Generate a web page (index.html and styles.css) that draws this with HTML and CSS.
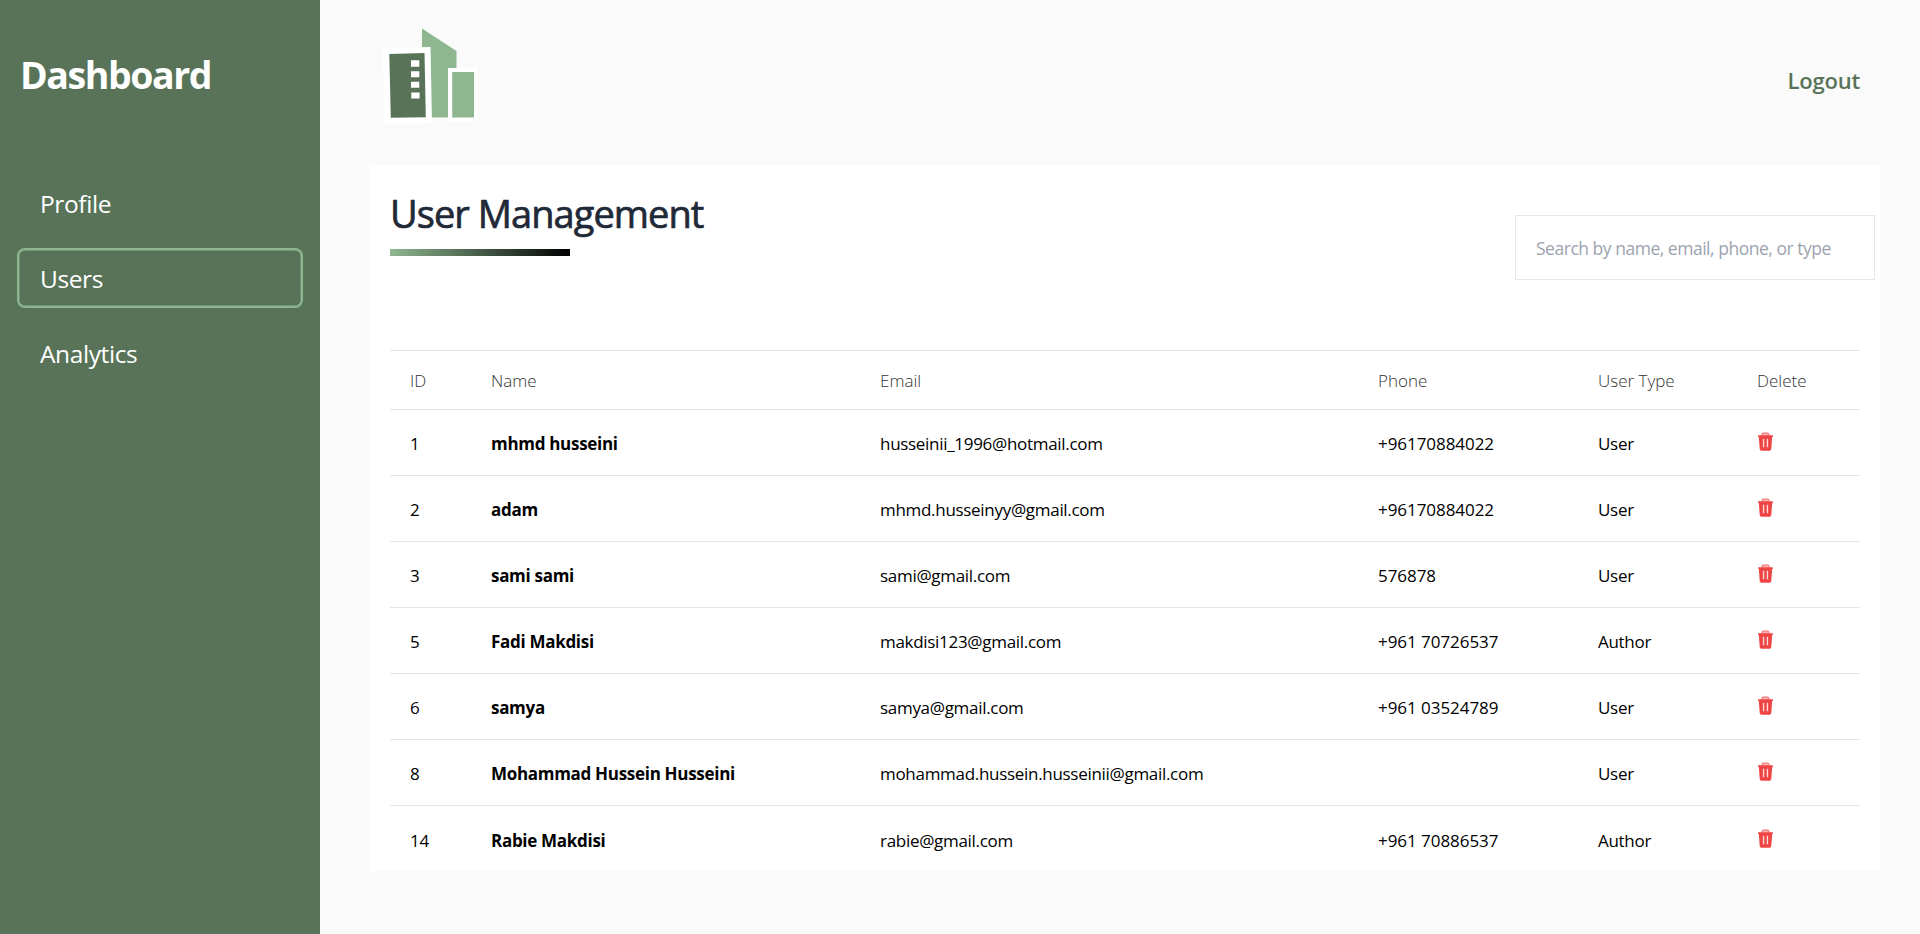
FILE: index.html
```html
<!DOCTYPE html>
<html lang="en">
<head>
<meta charset="utf-8">
<title>Dashboard</title>
<link rel="stylesheet" href="styles.css">
</head>
<body>
<svg width="0" height="0" class="defs" aria-hidden="true">
  <symbol id="trash" viewBox="0 0 14 18" preserveAspectRatio="none">
    <path d="M3.8 3.5V2.2Q3.8.9 5.1.9h3.8q1.3 0 1.3 1.3v1.3" fill="#fbb4b4" stroke="#f47070" stroke-width="1"/>
    <path d="M.1 3.1h13.8v1.6h-.7l-.8 11.4q-.1 1.6-1.7 1.6H3.3q-1.6 0-1.7-1.6L.8 4.7H.1z" fill="#ef4444"/>
    <path d="M5.200 6.400v8M8.800 6.400v8" stroke="#fff" stroke-opacity=".8" stroke-width="1.300"/>
  </symbol>
</svg>
<div class="layout">
  <aside class="sidebar">
    <h1 class="brand">Dashboard</h1>
    <nav class="nav">
      <a class="nav-item">Profile</a>
      <a class="nav-item active">Users</a>
      <a class="nav-item">Analytics</a>
    </nav>
  </aside>
  <main class="main">
    <header class="topbar">
      <svg class="logo" width="100" height="106" viewBox="0 0 100 106">
        <path d="M39 8.500 73.500 31v66.500H39z" fill="#8eb790"/>
        <path d="M0 28 47.500 27l1.500 76-48 1z" fill="#fff"/>
        <path d="M6.300 34 41.500 33l1.300 64.200-35 .5z" fill="#587358"/>
        <path d="M28 40.300h8.300v6.400H28zM28 51.300h8.300v6H28zM28 61.800h8.300v6H28zM28.300 72.500h8.300v6h-8.300z" fill="#fff"/>
        <path d="M65 48h30v53H65z" fill="#fff"/>
        <path d="M69.200 52h21.800v45.600H69.200z" fill="#8eb790"/>
      </svg>
      <a class="logout">Logout</a>
    </header>
    <section class="card">
      <div class="card-head">
        <div>
          <h2 class="title">User Management</h2>
          <div class="underline"></div>
        </div>
        <input class="search" type="text" placeholder="Search by name, email, phone, or type">
      </div>
      <table class="users">
        <colgroup><col class="c-id"><col class="c-name"><col class="c-email"><col class="c-phone"><col class="c-type"><col class="c-del"></colgroup>
        <thead><tr><th>ID</th><th>Name</th><th>Email</th><th>Phone</th><th>User Type</th><th>Delete</th></tr></thead>
        <tbody>
          <tr><td>1</td><td class="name">mhmd husseini</td><td>husseinii_1996@hotmail.com</td><td class="phone">+96170884022</td><td>User</td><td><svg class="trash"><use href="#trash"/></svg></td></tr>
          <tr><td>2</td><td class="name">adam</td><td>mhmd.husseinyy@gmail.com</td><td class="phone">+96170884022</td><td>User</td><td><svg class="trash"><use href="#trash"/></svg></td></tr>
          <tr><td>3</td><td class="name">sami sami</td><td>sami@gmail.com</td><td class="phone">576878</td><td>User</td><td><svg class="trash"><use href="#trash"/></svg></td></tr>
          <tr><td>5</td><td class="name">Fadi Makdisi</td><td>makdisi123@gmail.com</td><td class="phone">+961 70726537</td><td>Author</td><td><svg class="trash"><use href="#trash"/></svg></td></tr>
          <tr><td>6</td><td class="name">samya</td><td>samya@gmail.com</td><td class="phone">+961 03524789</td><td>User</td><td><svg class="trash"><use href="#trash"/></svg></td></tr>
          <tr><td>8</td><td class="name">Mohammad Hussein Husseini</td><td>mohammad.hussein.husseinii@gmail.com</td><td class="phone"></td><td>User</td><td><svg class="trash"><use href="#trash"/></svg></td></tr>
          <tr><td>14</td><td class="name">Rabie Makdisi</td><td>rabie@gmail.com</td><td class="phone">+961 70886537</td><td>Author</td><td><svg class="trash"><use href="#trash"/></svg></td></tr>
        </tbody>
      </table>
    </section>
  </main>
</div>
</body>
</html>
```
FILE: styles.css
```css
*, *::before, *::after { box-sizing: border-box; }
body {
  margin: 0;
  background: #fafafa;
  font-family: "Segoe UI", "Open Sans", "Noto Sans", sans-serif;
  color: #000;
}
h1, h2 { margin: 0; }
.defs { position: absolute; }
.layout { display: flex; height: 934px; }
.sidebar {
  width: 320px;
  flex: none;
  background: #587358;
  color: #fff;
  padding: 50px 17px 0 17px;
}
.brand {
  padding-left: 3px;
  font-size: 37.5px;
  line-height: 49px;
  font-weight: 700;
  letter-spacing: -1.45px;
}
.nav { display: flex; flex-direction: column; gap: 15px; margin-top: 74px; }
.nav-item {
  height: 60px;
  padding-left: 21px;
  border: 2px solid transparent;
  border-radius: 8px;
  font-size: 24.5px;
  line-height: 57px;
  letter-spacing: -0.4px;
}
.nav-item.active {
  width: 286px;
  border-color: #8eb790;
  box-shadow: inset 0 0 0 0.5px #8eb790;
}
.main { flex: 1; padding: 0 40px 0 50px; }
.topbar {
  display: flex;
  justify-content: space-between;
  align-items: flex-start;
  height: 165px;
  padding: 20px 20px 0 13px;
}
.logo { display: block; }
.logout {
  margin-top: 45px;
  font-size: 22px;
  line-height: 30px;
  letter-spacing: -0.2px;
  font-weight: 600;
  color: #587358;
}
.card { background: #fff; height: 706px; padding: 20px; }
.card-head {
  display: flex;
  justify-content: space-between;
  height: 165px;
  margin-right: -15px;
}
.title {
  padding-top: 2px;
  font-size: 38px;
  line-height: 52px;
  font-weight: 500;
  letter-spacing: -0.95px;
  -webkit-text-stroke: 0.7px #1f2937;
  color: #1f2937;
}
.underline {
  width: 180px;
  height: 7px;
  margin-top: 10px;
  background: linear-gradient(to right, #8eb790, #000);
}
.search {
  width: 360px;
  height: 65px;
  margin-top: 30px;
  padding: 1px 20px 0;
  border: 1px solid #e5e7eb;
  font: 400 17.5px "Segoe UI", "Open Sans", sans-serif;
  letter-spacing: -0.48px;
  outline: none;
}
.search::placeholder { color: #9ca3af; opacity: 1; }
.users {
  width: 1470px;
  table-layout: fixed;
  border-collapse: separate;
  border-spacing: 0;
  border-top: 1px solid #e5e5e5;
}
.c-id { width: 81px; }
.c-name { width: 389px; }
.c-email { width: 498px; }
.c-phone { width: 220px; }
.c-type { width: 159px; }
.c-del { width: 123px; }
th, td {
  text-align: left;
  vertical-align: middle;
  padding: 0 0 0 20px;
  white-space: nowrap;
}
th {
  height: 59px;
  font-size: 17px;
  font-weight: 300;
  color: #333;
  border-bottom: 1px solid #e5e5e5;
}
td {
  height: 66px;
  padding-top: 2px;
  font-size: 17px;
  font-weight: 400;
  letter-spacing: -0.3px;
  border-bottom: 1px solid #e5e5e5;
}
td.phone { letter-spacing: -0.05px; }
tr:last-child td { border-bottom: 0; }
.name { font-weight: 700; }
.trash { display: block; width: 15px; height: 19px; margin: -4px 0 0 1px; }
```
